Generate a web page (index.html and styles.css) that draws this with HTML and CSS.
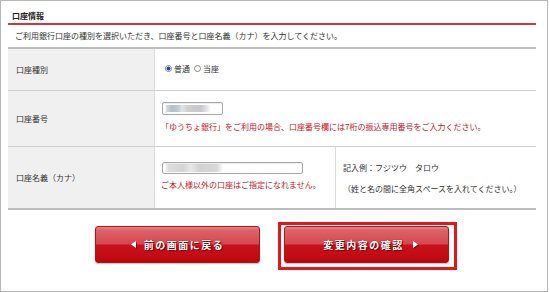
FILE: index.html
```html
<!DOCTYPE html>
<html lang="ja">
<head>
<meta charset="utf-8">
<link rel="stylesheet" href="styles.css">
</head>
<body>
<div class="frame">
  <div class="content">
    <h2 class="title">口座情報</h2>
    <p class="desc">ご利用銀行口座の種別を選択いただき、口座番号と口座名義（カナ）を入力してください。</p>
    <div class="table">
      <div class="row row1">
        <div class="label">口座種別</div>
        <div class="value radios">
          <label class="radio"><input type="radio" name="kind" checked><span>普通</span></label>
          <label class="radio"><input type="radio" name="kind"><span>当座</span></label>
        </div>
      </div>
      <div class="row row2">
        <div class="label">口座番号</div>
        <div class="value stack">
          <input class="field field-num" type="text" aria-label="口座番号">
          <p class="note">「ゆうちょ銀行」をご利用の場合、口座番号欄には7桁の振込専用番号をご入力ください。</p>
        </div>
      </div>
      <div class="row row3">
        <div class="label">口座名義（カナ）</div>
        <div class="value stack mid">
          <input class="field field-name" type="text" aria-label="口座名義">
          <p class="note">ご本人様以外の口座はご指定になれません。</p>
        </div>
        <div class="value example">
          <p class="ex1">記入例：フジツウ　タロウ</p>
          <p class="ex2">（姓と名の間に全角スペースを入れてください。）</p>
        </div>
      </div>
    </div>
    <div class="actions">
      <button class="btn" type="button">
        <svg class="tri" width="5" height="7" viewBox="0 0 5 7"><polygon points="5,0 5,7 0,3.5" fill="#fff"/></svg>
        <span>前の画面に戻る</span>
      </button>
      <div class="hl-wrap">
        <button class="btn btn-next" type="button">
          <span>変更内容の確認</span>
          <svg class="tri" width="5" height="7" viewBox="0 0 5 7"><polygon points="0,0 0,7 5,3.5" fill="#fff"/></svg>
        </button>
        <span class="highlight"></span>
      </div>
    </div>
  </div>
</div>
</body>
</html>
```

FILE: styles.css
```css
* { box-sizing: border-box; }
html, body { margin: 0; padding: 0; background: #fff; }
body {
  font-family: "Noto Sans CJK JP", "Noto Sans", "DejaVu Sans", sans-serif;
  color: #333;
  width: 550px;
  height: 292px;
  overflow: hidden;
}
.frame {
  width: 548px;
  height: 292px;
  border: 1px solid #b8b8b8;
  padding: 0 11px 0 7px;
}
.content { width: 528px; }
.title {
  margin: 0;
  font-size: 8px;
  font-weight: bold;
  line-height: 12px;
  padding: 9px 0 1px 4px;
  height: 24px;
  border-bottom: 2px solid #d8333a;
  color: #222;
}
.desc {
  margin: 0;
  font-size: 8px;
  line-height: 22px;
  height: 24px;
  padding-left: 7px;
  border-bottom: 2px solid #bdbdbd;
}
.table { border-bottom: 2px solid #bdbdbd; }
.row {
  display: flex;
  border-bottom: 1px solid #cfcfcf;
}
.row3 { border-bottom: none; }
.row1 { height: 42px; }
.row2 { height: 56px; }
.row3 { height: 61px; }
.label {
  width: 147px;
  flex: none;
  background: #f0f0f0;
  border-right: 1px solid #dcdcdc;
  display: flex;
  align-items: center;
  padding-left: 8px;
  font-size: 8px;
  padding-bottom: 1px;
}
.value { flex: 1; font-size: 8px; }
.radios {
  display: flex;
  align-items: center;
  padding-left: 10px;
  gap: 4px;
  padding-bottom: 2px;
}
.radio { display: flex; align-items: center; gap: 2px; }
.radio input {
  appearance: none;
  -webkit-appearance: none;
  width: 7px;
  height: 7px;
  margin: 0;
  border: 1px solid #8a8a8a;
  border-radius: 50%;
  background: #fff;
}
.radio input:checked {
  border-color: #6b84a6;
  background: radial-gradient(circle, #1d4f8c 0 1.8px, #fff 2.2px);
}
.stack { padding: 11px 0 0 7px; }
.field {
  display: block;
  margin: 0;
  padding: 0;
  border: 1px solid #a9a9a9;
  border-radius: 2px;
  background-color: #fff;
  box-shadow: inset 0 1px 1px rgba(0,0,0,0.08);
}
.field-num {
  width: 61px;
  height: 13px;
  background-image: linear-gradient(to right, transparent 2px, #d2d6de 4px, #b6bccb 9px, #c3c8d3 15px, #e2e3e6 19px, #cfcfd2 25px, #c8c8cc 38px, #e6e6e8 44px, transparent 48px);
  background-size: 100% 7px;
  background-position: 0 2px;
  background-repeat: no-repeat;
}
.field-name {
  width: 141px;
  height: 12px;
  margin-top: 4px;
  background-image: linear-gradient(to right, transparent 2px, #dedede 5px, #d4d4d4 20px, #e8e8e8 28px, #d2d2d2 36px, #d8d8d8 54px, transparent 60px);
  background-size: 100% 8px;
  background-position: 0 1px;
  background-repeat: no-repeat;
}
.note {
  margin: 6px 0 0;
  line-height: 12px;
  color: #c8161e;
  margin-left: -1px;
}
.row3 .note { margin-top: 5px; }
.mid {
  flex: none;
  width: 181px;
  border-right: 1px solid #dcdcdc;
}
.example { padding: 15px 0 0 7px; }
.example p { margin: 0; line-height: 12px; }
.example .ex2 { margin-top: 9px; }
.actions {
  display: flex;
  justify-content: center;
  gap: 24px;
  padding-top: 16px;
}
.hl-wrap { position: relative; }
.btn {
  width: 165px;
  height: 37px;
  margin: 0;
  border: 1px solid #b3121a;
  border-radius: 3px;
  background: linear-gradient(#e4858a 0%, #dc6268 10%, #d6484f 48%, #c8121b 52%, #c20a12 88%, #b9050d 100%);
  box-shadow: 0 1px 1px rgba(0,0,0,0.25);
  display: flex;
  align-items: center;
  justify-content: center;
  gap: 8px;
  padding: 0 0 1px 0;
  color: #fff;
  font-family: "Noto Sans CJK JP", "Noto Sans", sans-serif;
  font-weight: bold;
  font-size: 10px;
  letter-spacing: 1.5px;
  text-shadow: 1px 1px 1px #6a0004, 0 0 1px #7a0006;
}
.btn .tri { flex: none; filter: drop-shadow(1px 1px 0 rgba(90,0,0,0.6)); }
.btn-next { gap: 9px; padding-left: 8px; }
.highlight {
  position: absolute;
  left: -6px;
  top: -4px;
  width: 179px;
  height: 48px;
  border: 3px solid #e8141c;
  pointer-events: none;
}
```
